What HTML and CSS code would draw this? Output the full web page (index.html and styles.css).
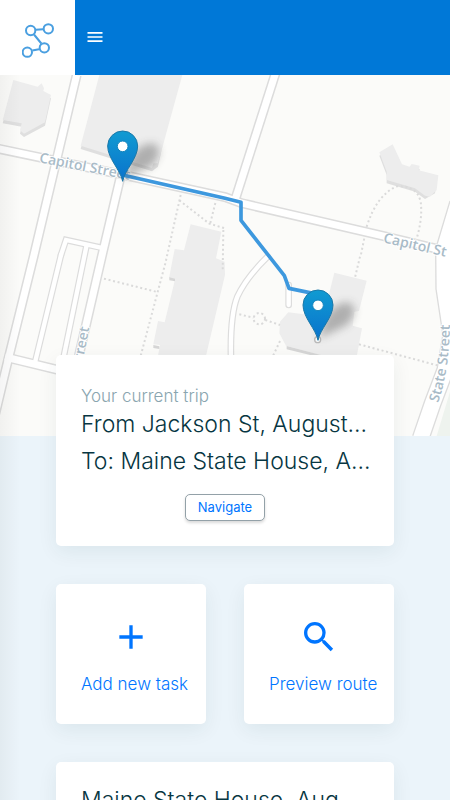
FILE: index.html
```html
<!DOCTYPE html>
<html lang="en">
<head>
    <meta charset="UTF-8">
    <meta name="viewport" content="width=device-width, initial-scale=1.0">
    <title>Current trip</title>
    <link rel="stylesheet" href="styles.css">
</head>
<body>

    <header class="topbar">
        <a class="logo" href="#" aria-label="Home">
            <svg viewBox="0 0 96 104" width="32" height="35">
                <g fill="none" stroke="#4a9fe0" stroke-width="6">
                    <path d="M41 20 L64 18 M36 34 L58 61 M51 78 L31 82"/>
                    <circle cx="26" cy="22" r="14"/>
                    <circle cx="79" cy="17" r="14"/>
                    <circle cx="67" cy="74" r="14"/>
                    <circle cx="16" cy="87" r="14"/>
                </g>
            </svg>
        </a>
        <button class="menu-button" type="button" aria-label="Menu">
            <svg viewBox="0 0 24 24" width="20" height="20" fill="currentColor">
                <path d="M3 6h18v2H3zM3 11h18v2H3zM3 16h18v2H3z"/>
            </svg>
        </button>
    </header>

    <main class="page">
        <svg class="map" viewBox="0 0 1350 1083" preserveAspectRatio="xMidYMin slice" role="img" aria-label="Route map">
            <defs>
                <linearGradient id="pinFill" x1="0" y1="0" x2="0" y2="1">
                    <stop offset="0" stop-color="#109bd2"/>
                    <stop offset="1" stop-color="#0a72cc"/>
                </linearGradient>
                <filter id="soft" x="-50%" y="-50%" width="200%" height="200%">
                    <feGaussianBlur stdDeviation="12"/>
                </filter>
                <g id="roads" fill="none">
                    <path d="M230 0 L102 540 L22 864 L-30 1083"/>
                    <path d="M-10 220 L380 302 L675 366 L723 384 L1145 482 L1330 526"/>
                    <path d="M360 312 L304 550 L228 880"/>
                    <path d="M828 -10 L706 372"/>
                    <path d="M15 846 L180 886"/>
                </g>
                <g id="lanes" fill="none">
                    <path d="M183 540 L104 866"/>
                    <path d="M312 520 L198 495 L183 540"/>
                    <path d="M260 510 L190 850"/>
                    <path d="M803 545 Q738 608 712 665 Q690 720 693 850"/>
                    <path d="M866 630 L866 690"/>
                </g>
                <path id="stateStreet" fill="none" d="M1374 385 L1332 525 L1333 640 L1354 780 L1336 885 L1298 985 L1262 1090"/>
                <path id="stateLabel" fill="none" d="M1314 984 Q1352 880 1350 700 V500"/>
                <g id="pin">
                    <path d="M0 -5 L25 -75 Q60 -120 98 -112 Q125 -85 85 -45 Z" fill="#333" opacity=".33" filter="url(#soft)"/>
                    <path d="M0 0 C-6 -34 -45 -68 -45 -106 A45 45 0 0 1 45 -106 C45 -68 6 -34 0 0 Z" fill="url(#pinFill)" stroke="#1a78a8" stroke-width="3"/>
                    <circle cy="-105" r="16" fill="#fff" stroke="#1685bd" stroke-width="3"/>
                </g>
            </defs>

            <rect width="1350" height="1083" fill="#fbfbf9"/>
            <path d="M1350 950 L1310 1083 H1350 Z" fill="#eef3ee"/>

            <!-- buildings -->
            <g fill="#dfdfdf" transform="translate(0 10)">
                <path d="M40 15 L113 35 L125 25 L132 48 L153 60 L135 142 L72 176 L60 166 L65 145 L8 135 Z"/>
                <path d="M300 0 H530 L474 265 L456 279 L242 212 Z"/>
                <path d="M1138 232 L1178 208 L1206 268 L1229 275 L1235 267 L1259 272 L1256 286 L1310 310 L1305 345 L1275 362 L1245 340 L1160 315 V290 Z"/>
            </g>
            <g fill="#ededed">
                <path d="M40 15 L113 35 L125 25 L132 40 L130 48 L153 60 L135 142 L72 176 L60 166 L65 145 L8 135 Z"/>
                <path d="M298 0 H547 L474 265 L460 265 L456 279 L242 212 Z"/>
                <path d="M572 448 L664 470 L648 550 L674 560 L675 600 L618 842 H474 L480 810 L460 808 L474 738 L494 742 L524 618 L507 610 L524 522 L552 526 Z"/>
                <path d="M1138 232 L1178 208 L1206 268 L1229 275 L1235 267 L1259 272 L1256 286 L1315 301 L1310 345 L1290 365 L1275 362 L1245 340 L1160 315 V290 Z"/>
                <path d="M1003 593 L1100 617 L1077 708 L1063 710 L1058 752 L1086 760 L1070 845 L980 845 L858 812 L838 775 L840 740 L865 712 L970 725 Z"/>
            </g>
            <path d="M508 607 l17 4 v8 l-17 -3 Z M460 810 l18 4 v8 l-18 -3 Z M860 813 L1000 850 H970 L860 823 Z" fill="#d6d6d6"/>

            <!-- foot paths -->
            <g class="trail">
                <path d="M542 360 L496 565 L420 850"/>
                <path d="M538 376 L628 446 L675 460"/>
                <path d="M646 384 L630 448"/>
                <path d="M670 465 L668 590"/>
                <path d="M312 611 L468 650"/>
                <path d="M1083 538 L1100 455 Q1130 360 1190 334 Q1250 330 1262 380 Q1270 440 1240 520"/>
                <path d="M1080 545 L1064 612"/>
                <path d="M1077 808 L1312 871"/>
                <path d="M718 718 L760 728 M796 735 L840 750"/>
                <circle cx="778" cy="731" r="17"/>
                <path d="M840 798 L818 845"/>
            </g>

            <use href="#roads" class="road-edge"/>
            <use href="#lanes" class="lane-edge"/>
            <use href="#stateStreet" class="state-edge"/>
            <use href="#roads" class="road-fill"/>
            <use href="#lanes" class="lane-fill"/>
            <use href="#stateStreet" class="state-fill"/>

            <g class="street-name">
                <text transform="translate(116 262) rotate(11)">Capitol Street</text>
                <text transform="translate(1148 502) rotate(13)">Capitol St</text>
                <text><textPath href="#stateLabel">State Street</textPath></text>
                <text transform="translate(268 758) rotate(-79)" text-anchor="end">Street</text>
            </g>

            <path class="route" d="M368 300 L675 370 L723 382 V436 L853 602 L867 640 L954 658"/>
            <circle cx="953" cy="794" r="9" fill="#fff" stroke="#bbb" stroke-width="4"/>
            <use href="#pin" x="368" y="319"/>
            <use href="#pin" x="954" y="796"/>
        </svg>

        <div class="content">
            <section class="card trip">
                <p class="trip-label">Your current trip</p>
                <h2 class="place">From Jackson St, August...</h2>
                <h2 class="place">To: Maine State House, A...</h2>
                <button class="navigate" type="button">Navigate</button>
            </section>

            <div class="actions">
                <a class="card action" href="#">
                    <svg viewBox="0 0 24 24" width="40" height="40" fill="currentColor">
                        <path d="M19 13h-6v6h-2v-6H5v-2h6V5h2v6h6v2z"/>
                    </svg>
                    <span class="action-label">Add new task</span>
                </a>
                <a class="card action" href="#">
                    <svg viewBox="0 0 24 24" width="40" height="40" fill="currentColor">
                        <path d="M15.5 14h-.79l-.28-.27A6.471 6.471 0 0 0 16 9.5 6.5 6.5 0 1 0 9.5 16c1.61 0 3.09-.59 4.23-1.57l.27.28v.79l5 4.99L20.49 19l-4.99-5zm-6 0C7.01 14 5 11.99 5 9.5S7.01 5 9.5 5 14 7.01 14 9.5 11.99 14 9.5 14z"/>
                    </svg>
                    <span class="action-label">Preview route</span>
                </a>
            </div>

            <section class="card stop">
                <h2 class="place">Maine State House, Aug...</h2>
            </section>
        </div>
    </main>

</body>
</html>
```
FILE: styles.css
```css
* {
    box-sizing: border-box;
}

body {
    margin: 0;
    height: 100vh;
    display: flex;
    flex-direction: column;
    overflow: hidden;
    font-family: Inter, "Open Sans", sans-serif;
    font-weight: 300;
    font-size: 17px;
    color: #073642;
    background-color: #ebf4fa;
}

.topbar {
    display: flex;
    align-items: center;
    flex: none;
    height: 75px;
    background-color: #0078d7;
}

.logo {
    display: flex;
    align-items: center;
    justify-content: center;
    width: 75px;
    height: 75px;
    padding-top: 5px;
    background-color: white;
}

.menu-button {
    display: flex;
    padding: 0 10px 2px;
    border: none;
    background: none;
    color: white;
}

.page {
    position: relative;
    flex: 1;
    min-height: 0;
    overflow-y: auto;
    scrollbar-width: none;
}

/* shadow of the closed side menu */
.page::before {
    content: "";
    position: absolute;
    top: 0;
    left: 0;
    width: 20px;
    height: 100%;
    background: linear-gradient(to right, rgba(0, 0, 0, 0.04), rgba(0, 0, 0, 0));
}

/* Map */
.map {
    display: block;
    width: 100%;
    height: 361px;
}
.road-edge {
    stroke: #dcdcdc;
    stroke-width: 30px;
}
.road-fill {
    stroke: white;
    stroke-width: 21px;
}
.lane-edge {
    stroke: #dcdcdc;
    stroke-width: 20px;
    stroke-linecap: round;
}
.lane-fill {
    stroke: white;
    stroke-width: 13px;
    stroke-linecap: round;
}
.state-edge {
    stroke: #dcdcdc;
    stroke-width: 54px;
}
.state-fill {
    stroke: white;
    stroke-width: 46px;
}
.trail {
    fill: none;
    stroke: #dadada;
    stroke-width: 6px;
    stroke-dasharray: 6 8;
}
.route {
    fill: none;
    stroke: #3d98de;
    stroke-width: 11px;
    stroke-linejoin: round;
}
.street-name {
    font-family: "Open Sans", sans-serif;
    font-size: 42px;
    font-weight: 600;
    fill: #a9bbc7;
    stroke: white;
    stroke-width: 5px;
    paint-order: stroke;
}

/* Cards */
.content {
    position: relative;
    display: flex;
    flex-direction: column;
    gap: 38px;
    margin-top: -81px;
    padding: 0 56px 38px;
}
.card {
    padding: 25px;
    border-radius: 5px;
    background-color: white;
    box-shadow: 0 6px 20px rgba(0, 50, 50, 0.07);
}
.trip {
    display: flex;
    flex-direction: column;
    padding-top: 31px;
}
.trip-label {
    margin: 0;
    line-height: 20px;
    color: #8aa5af;
}
.place {
    margin: 0;
    font-size: 23px;
    font-weight: 300;
    line-height: 37px;
    white-space: nowrap;
}
.navigate {
    align-self: center;
    margin-top: 14px;
    width: 80px;
    height: 27px;
    padding: 0 0 2px;
    border: 1px solid #93a1a8;
    border-radius: 5px;
    background-color: white;
    box-shadow: 0 2px 3px rgba(0, 0, 0, 0.15);
    font-family: inherit;
    font-size: 13px;
    color: #0075ff;
}
.actions {
    display: grid;
    grid-template-columns: 1fr 1fr;
    gap: 38px;
}
.action {
    display: flex;
    flex-direction: column;
    align-items: center;
    gap: 15px;
    min-width: 0;
    height: 140px;
    padding-top: 33px;
    line-height: 24px;
    color: #0075ff;
    text-decoration: none;
    white-space: nowrap;
}
.action-label {
    align-self: flex-start;
}
.stop {
    padding-top: 20px;
}
```
